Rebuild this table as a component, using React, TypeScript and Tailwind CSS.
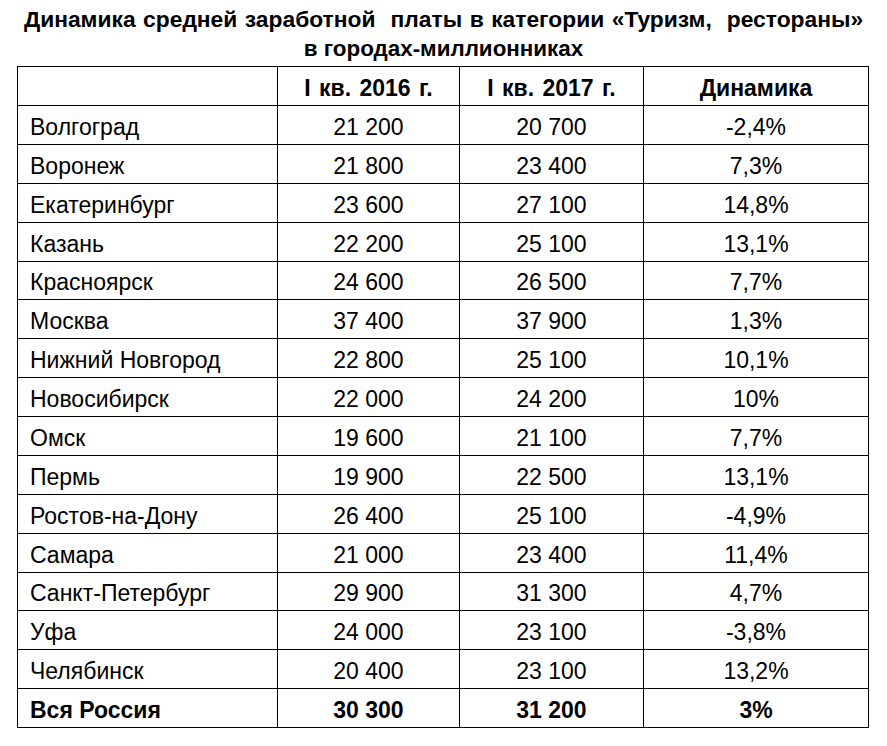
import React from "react";

type Row = {
  city: string;
  q2016: string;
  q2017: string;
  change: string;
  total?: boolean;
};

const rows: Row[] = [
  { city: "Волгоград", q2016: "21 200", q2017: "20 700", change: "-2,4%" },
  { city: "Воронеж", q2016: "21 800", q2017: "23 400", change: "7,3%" },
  { city: "Екатеринбург", q2016: "23 600", q2017: "27 100", change: "14,8%" },
  { city: "Казань", q2016: "22 200", q2017: "25 100", change: "13,1%" },
  { city: "Красноярск", q2016: "24 600", q2017: "26 500", change: "7,7%" },
  { city: "Москва", q2016: "37 400", q2017: "37 900", change: "1,3%" },
  { city: "Нижний Новгород", q2016: "22 800", q2017: "25 100", change: "10,1%" },
  { city: "Новосибирск", q2016: "22 000", q2017: "24 200", change: "10%" },
  { city: "Омск", q2016: "19 600", q2017: "21 100", change: "7,7%" },
  { city: "Пермь", q2016: "19 900", q2017: "22 500", change: "13,1%" },
  { city: "Ростов-на-Дону", q2016: "26 400", q2017: "25 100", change: "-4,9%" },
  { city: "Самара", q2016: "21 000", q2017: "23 400", change: "11,4%" },
  { city: "Санкт-Петербург", q2016: "29 900", q2017: "31 300", change: "4,7%" },
  { city: "Уфа", q2016: "24 000", q2017: "23 100", change: "-3,8%" },
  { city: "Челябинск", q2016: "20 400", q2017: "23 100", change: "13,2%" },
  { city: "Вся Россия", q2016: "30 300", q2017: "31 200", change: "3%", total: true },
];

const cell = "h-full flex items-center pt-[4px] border-r border-b border-black";

function TableRow({ row }: { row: Row }) {
  const weight = row.total ? "font-bold" : "font-normal";
  return (
    <div className={`grid grid-cols-[260px_182px_184px_225px] h-[38.88px] ${weight}`}>
      <div className={`${cell} pl-[12px]`}>{row.city}</div>
      <div className={`${cell} justify-center`}>{row.q2016}</div>
      <div className={`${cell} justify-center`}>{row.q2017}</div>
      <div className={`${cell} justify-center`}>{row.change}</div>
    </div>
  );
}

export default function App() {
  return (
    <div
      className="w-[887px] h-[746px] bg-white text-black overflow-hidden"
      style={{ fontFamily: '"Liberation Sans", Arial, sans-serif' }}
    >
      {/* Title */}
      <div className="h-[66px] pt-[5px] text-center leading-[29px] font-bold">
        <div className="text-[22.8px] [word-spacing:1.2px] whitespace-pre">
          {"Динамика средней заработной\u00a0 платы в категории «Туризм,\u00a0 рестораны»"}
        </div>
        <div className="text-[22.4px]">в городах-миллионниках</div>
      </div>

      {/* Table */}
      <div className="ml-[17px] w-[852px] border-l border-t border-black text-[23px] leading-[26px]">
        <div className="grid grid-cols-[260px_182px_184px_225px] h-[39px] font-bold">
          <div className={cell}></div>
          <div className={`${cell} justify-center [word-spacing:2px]`}>I кв. 2016 г.</div>
          <div className={`${cell} justify-center [word-spacing:2px]`}>I кв. 2017 г.</div>
          <div className={`${cell} justify-center`}>Динамика</div>
        </div>
        {rows.map((row) => (
          <TableRow key={row.city} row={row} />
        ))}
      </div>
    </div>
  );
}
